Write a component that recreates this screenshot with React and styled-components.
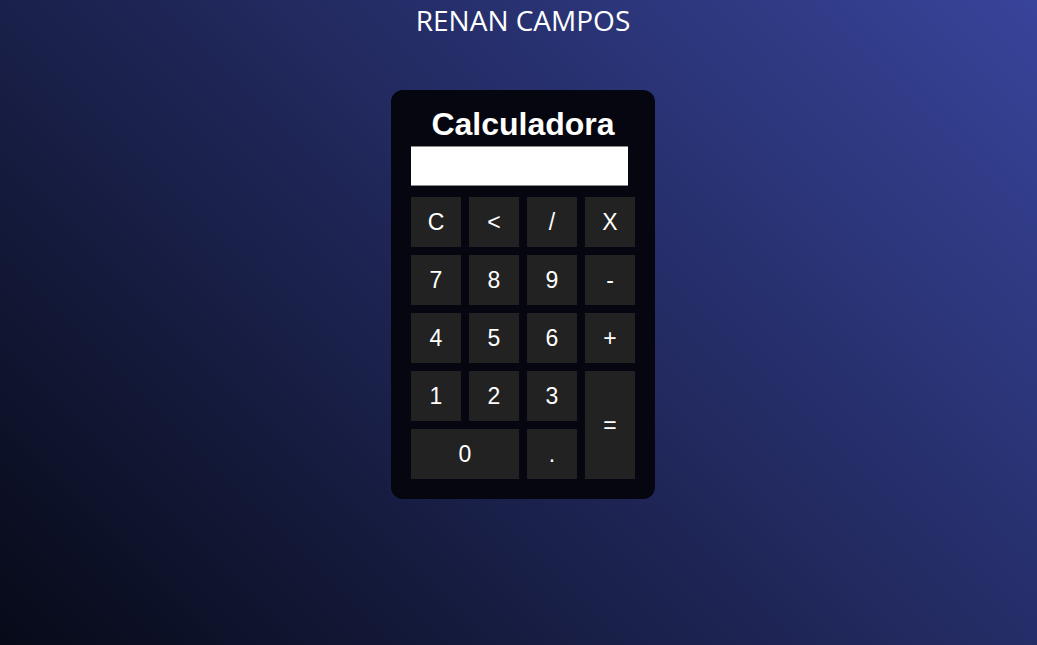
import React from 'react'
import styled, { createGlobalStyle } from 'styled-components'

const GlobalStyle = createGlobalStyle`
    * {
        box-sizing: border-box;
    }
    html, body {
        margin: 0;
        padding: 0;
        height: 100%;
    }
    body {
        background: linear-gradient(45deg, #070a18, #38449a);
        background-attachment: fixed;
        font-family: Arial, 'Liberation Sans', sans-serif;
        overflow: hidden;
    }
`

const Page = styled.div`
    width: 100%;
    min-height: 100vh;
    padding-left: 9px;
    display: flex;
    flex-direction: column;
    align-items: center;
`

const Header = styled.h2`
    margin: 0;
    padding-top: 1px;
    color: #fff;
    font-family: 'Open Sans', sans-serif;
    font-weight: 400;
    font-size: 28px;
    line-height: 38px;
`

const Calculator = styled.div`
    margin-top: 51px;
    width: 264px;
    padding: 20px;
    background: #05060f;
    border-radius: 12px;
    display: flex;
    flex-direction: column;
    align-items: center;
`

const Title = styled.h1`
    margin: 0 0 8px;
    color: #fff;
    font-family: 'Liberation Sans', Arial, sans-serif;
    font-size: 32px;
    font-weight: 700;
    line-height: 28px;
`

const Display = styled.input`
    align-self: flex-start;
    width: 217px;
    height: 40px;
    margin-bottom: 11px;
    border: none;
    border-top: 1px solid #8a8a8a;
    border-bottom: 1px solid #8a8a8a;
    background: #fff;
    outline: none;
    font-size: 22px;
    text-align: right;
`

const Keys = styled.div`
    display: grid;
    grid-template-columns: repeat(4, 50px);
    grid-auto-rows: 50px;
    gap: 8px;
`

const Key = styled.button`
    border: none;
    background: #222222;
    color: #fff;
    font-family: 'Liberation Sans', Arial, sans-serif;
    font-size: 23px;
    cursor: pointer;
    grid-column: ${props => props.wide ? 'span 2' : 'auto'};
    grid-row: ${props => props.tall ? 'span 2' : 'auto'};
    padding: 0;
`

const keys = [
    { label: 'C' }, { label: '<' }, { label: '/' }, { label: 'X' },
    { label: '7' }, { label: '8' }, { label: '9' }, { label: '-' },
    { label: '4' }, { label: '5' }, { label: '6' }, { label: '+' },
    { label: '1' }, { label: '2' }, { label: '3' }, { label: '=', tall: true },
    { label: '0', wide: true }, { label: '.' },
]

const App = () => {
    return (
        <Page>
            <GlobalStyle />
            <Header>RENAN CAMPOS</Header>
            <Calculator>
                <Title>Calculadora</Title>
                <Display type="text" readOnly />
                <Keys>
                    {keys.map(k => (
                        <Key key={k.label} wide={k.wide} tall={k.tall}>{k.label}</Key>
                    ))}
                </Keys>
            </Calculator>
        </Page>
    )
}

export default App
